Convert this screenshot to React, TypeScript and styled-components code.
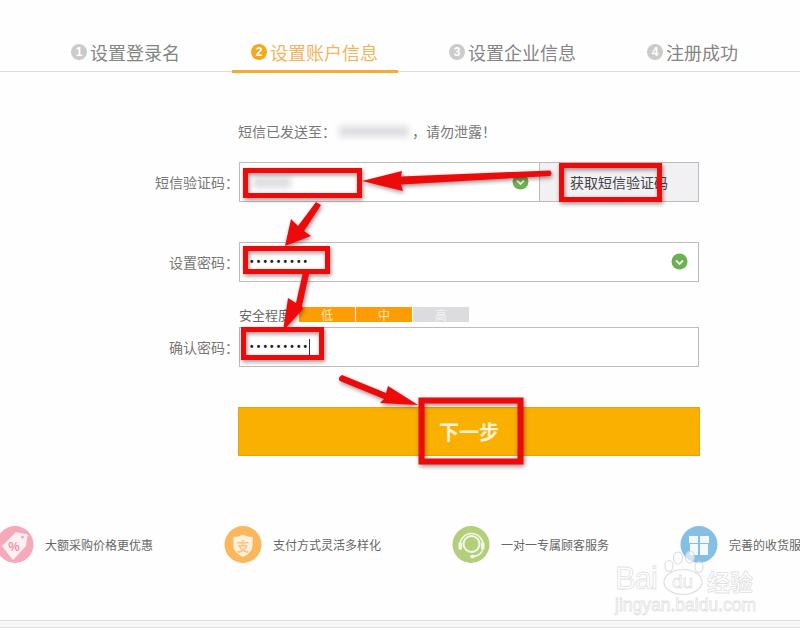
import React from "react";
import styled, { createGlobalStyle } from "styled-components";

const Global = createGlobalStyle`
  html, body { margin: 0; padding: 0; background: #fff; }
  body { font-family: "Noto Sans CJK SC", "Liberation Sans", sans-serif; }
`;

const Page = styled.div`
  position: relative;
  width: 800px;
  height: 633px;
  overflow: hidden;
  background: #fefefe;
`;

const Tabs = styled.nav`
  display: flex;
  gap: 32px;
  height: 71px;
  padding: 0 0 0 52px;
  border-bottom: 1px solid #dcdcdc;
  box-sizing: content-box;
`;

const Tab = styled.div<{ $active?: boolean }>`
  display: flex;
  align-items: center;
  gap: 3px;
  height: 73px;
  box-sizing: border-box;
  padding: 34px 20px 0 19px;
  font-size: 18px;
  line-height: 24px;
  color: ${(p) => (p.$active ? "#efb660" : "#858585")};
  border-bottom: 3px solid ${(p) => (p.$active ? "#f4ae2c" : "transparent")};
  white-space: nowrap;
`;

const StepNum = styled.span<{ $active?: boolean }>`
  display: inline-flex;
  align-items: center;
  justify-content: center;
  width: 16px;
  height: 16px;
  border-radius: 50%;
  background: ${(p) => (p.$active ? "#f6a81c" : "#cbcbcb")};
  color: #fff;
  font: 700 12px/16px "Liberation Sans", sans-serif;
`;

const Form = styled.main`
  display: flex;
  flex-direction: column;
  padding-left: 239px;
  width: 460px;
`;

const Note = styled.div`
  display: flex;
  align-items: center;
  height: 20px;
  margin: 49px 0 21px -1px;
  font-size: 14px;
  color: #777;
  white-space: nowrap;
`;

const Blur = styled.span<{ $w: number }>`
  display: inline-block;
  width: ${(p) => p.$w}px;
  height: 11px;
  margin: 0 3px 0 3px;
  background: #dedee2;
  filter: blur(3px);
`;

const Row = styled.div<{ $top?: number }>`
  position: relative;
  display: flex;
  height: 40px;
  margin-top: ${(p) => p.$top ?? 0}px;
`;

const Label = styled.label`
  position: absolute;
  right: 100%;
  top: 0;
  font-size: 14px;
  line-height: 41px;
  color: #777;
  white-space: nowrap;
`;

const Field = styled.div`
  position: relative;
  flex: 1;
  display: flex;
  align-items: center;
  box-sizing: border-box;
  padding-left: 10px;
  border: 1px solid #bcbcbc;
  background: #fff;
`;

const Dots = styled.span`
  font: 700 10px/1 "Liberation Sans", sans-serif;
  letter-spacing: 3.2px;
  color: #222;
`;

const Caret = styled.span`
  width: 1px;
  height: 16px;
  margin-left: -1px;
  background: #333;
`;

const Check = styled.svg`
  position: absolute;
  right: 10px;
  top: 10px;
`;

const SmsButton = styled.button`
  width: 160px;
  height: 40px;
  margin-left: -1px;
  padding: 0;
  border: 1px solid #bcbcbc;
  background: #f1f0f3;
  font-family: inherit;
  font-size: 14px;
  color: #444;
`;

const Strength = styled.div`
  display: flex;
  align-items: center;
  height: 15px;
  margin: 25px 0 5px;
`;

const StrengthLabel = styled.span`
  width: 60px;
  font-size: 13px;
  line-height: 15px;
  color: #666;
  white-space: nowrap;
`;

const Level = styled.span<{ $on?: boolean }>`
  width: 56px;
  height: 15px;
  margin-right: 1px;
  background: ${(p) => (p.$on ? "#fd9c05" : "#dcdcde")};
  color: ${(p) => (p.$on ? "#fde6bd" : "#f4f4f4")};
  font-size: 12px;
  line-height: 15px;
  text-align: center;
`;

const NextButton = styled.button`
  width: 462px;
  height: 49px;
  margin: 40px 0 0 -1px;
  padding: 0;
  border: 1px solid #e3a316;
  background: #fab000;
  color: #fdf3d8;
  font-family: inherit;
  font-size: 20px;
  font-weight: 700;
`;

const Features = styled.section`
  display: grid;
  grid-template-columns: repeat(4, 228px);
  margin: 70px 0 0 -4px;
`;

const Feature = styled.div`
  display: flex;
  align-items: center;
  gap: 11px;
  height: 37px;
  font-size: 12px;
  color: #666;
  white-space: nowrap;
`;

const Badge = styled.svg`
  flex: none;
  width: 38px;
  height: 37px;
`;

const BadgeText = styled.text`
  font-family: "Noto Sans CJK SC", sans-serif;
  font-weight: 700;
`;

const Footer = styled.footer`
  height: 6px;
  margin-top: 57px;
  border-top: 1px solid #dedede;
  border-bottom: 1px solid #e2e2e2;
  background: #f6f5f8;
`;

const Overlay = styled.svg`
  position: absolute;
  inset: 0;
  pointer-events: none;
  filter: drop-shadow(1px 2px 2px rgba(60, 0, 0, 0.45));
`;

const Watermark = styled.div`
  position: absolute;
  left: 612px;
  top: 545px;
  width: 150px;
  height: 72px;
  pointer-events: none;
`;

const Paw = styled.svg`
  position: absolute;
  left: 50px;
  top: 0;
`;

const WmText = styled.span<{ $left: number; $top: number; $size: number; $line: number; $cjk?: boolean }>`
  position: absolute;
  left: ${(p) => p.$left}px;
  top: ${(p) => p.$top}px;
  font-family: ${(p) => (p.$cjk ? '"Noto Sans CJK SC"' : '"Liberation Sans"')}, sans-serif;
  font-size: ${(p) => p.$size}px;
  font-weight: ${(p) => (p.$cjk ? 700 : 400)};
  line-height: ${(p) => p.$line}px;
  color: rgba(255, 255, 255, 0.8);
  -webkit-text-stroke: 0.8px rgba(205, 205, 205, 0.6);
  white-space: nowrap;
`;

const WmBrand = styled(WmText)`
  letter-spacing: -1px;
`;

const steps = ["设置登录名", "设置账户信息", "设置企业信息", "注册成功"];

const CheckIcon = () => (
  <Check width="17" height="17" viewBox="0 0 17 17">
    <circle cx="8.5" cy="8.5" r="8" fill="#6cb052" />
    <path d="M5 7.5l3.5 3.5L12 7.5" fill="none" stroke="#e8f3e2" strokeWidth="1.8" />
  </Check>
);

const RED = "#ec0a0a";

export default function App() {
  return (
    <Page>
      <Global />
      <Tabs>
        {steps.map((s, i) => (
          <Tab key={s} $active={i === 1}>
            <StepNum $active={i === 1}>{i + 1}</StepNum>
            {s}
          </Tab>
        ))}
      </Tabs>

      <Form>
        <Note>
          短信已发送至：
          <Blur $w={70} />
          ，请勿泄露！
        </Note>
        <Row>
          <Label>短信验证码：</Label>
          <Field>
            <Blur $w={38} />
            <CheckIcon />
          </Field>
          <SmsButton>获取短信验证码</SmsButton>
        </Row>
        <Row $top={40}>
          <Label>设置密码：</Label>
          <Field>
            <Dots>•••••••••</Dots>
            <CheckIcon />
          </Field>
        </Row>
        <Strength>
          <StrengthLabel>安全程度</StrengthLabel>
          <Level $on>低</Level>
          <Level $on>中</Level>
          <Level>高</Level>
        </Strength>
        <Row>
          <Label>确认密码：</Label>
          <Field>
            <Dots>•••••••••</Dots>
            <Caret />
          </Field>
        </Row>
        <NextButton>下一步</NextButton>
      </Form>

      <Features>
        <Feature>
          <Badge viewBox="0 0 38 37">
            <circle cx="19" cy="18.5" r="18.5" fill="#f6a9b9" />
            <path d="M7 20 L20 7 L31 9 L29 20 L17 33 Z" fill="#fdf0f3" strokeLinejoin="round" stroke="#fdf0f3" strokeWidth="1.5" />
            <circle cx="26.5" cy="11" r="1.5" fill="#f6a9b9" />
            <BadgeText x="18" y="25" fontSize="12" fill="#f08da2" textAnchor="middle">%</BadgeText>
          </Badge>
          大额采购价格更优惠
        </Feature>
        <Feature>
          <Badge viewBox="0 0 38 37">
            <circle cx="19" cy="18.5" r="18.5" fill="#fbb75c" />
            <path d="M9.5 11 Q15 11 19 8.5 Q23 11 28.5 11 V20 Q28.5 26.5 19 31 Q9.5 26.5 9.5 20 Z" fill="#fff1dc" />
            <BadgeText x="19" y="24.5" fontSize="13" fill="#f9c683" textAnchor="middle">支</BadgeText>
          </Badge>
          支付方式灵活多样化
        </Feature>
        <Feature>
          <Badge viewBox="0 0 38 37">
            <circle cx="19" cy="18.5" r="18.5" fill="#b3cf7b" />
            <circle cx="19.5" cy="18" r="8" fill="none" stroke="#f4f8ea" strokeWidth="2" />
            <path d="M8 19 A11.5 11.5 0 0 1 31 19" fill="none" stroke="#f4f8ea" strokeWidth="1.5" />
            <rect x="6.5" y="16" width="3.5" height="8" rx="1.7" fill="#f4f8ea" />
            <rect x="29" y="16" width="3.5" height="8" rx="1.7" fill="#f4f8ea" />
            <path d="M30.5 24 Q29 29.5 21 30.5" fill="none" stroke="#f4f8ea" strokeWidth="1.4" />
            <ellipse cx="20.5" cy="30.5" rx="2.6" ry="1.7" fill="#f4f8ea" />
          </Badge>
          一对一专属顾客服务
        </Feature>
        <Feature>
          <Badge viewBox="0 0 38 37">
            <circle cx="19" cy="18.5" r="18.5" fill="#85bfe4" />
            <rect x="9" y="10" width="9" height="7" fill="#f2f8fc" />
            <rect x="20" y="10" width="9" height="7" fill="#f2f8fc" />
            <rect x="10" y="18" width="8" height="11" fill="#f2f8fc" />
            <rect x="20" y="18" width="8" height="11" fill="#f2f8fc" />
          </Badge>
          完善的收货服务
        </Feature>
      </Features>

      <Footer />

      <Overlay width="800" height="633" viewBox="0 0 800 633">
        <g fill="none" stroke={RED} strokeWidth="5">
          <rect x="245.5" y="170.5" width="114" height="25" />
          <rect x="561.5" y="165.5" width="98" height="34" />
          <rect x="245.5" y="248.5" width="82" height="23" />
          <rect x="243.5" y="329.5" width="78" height="28" />
        </g>
        <rect x="421.5" y="400.5" width="99" height="61" fill="none" stroke={RED} strokeWidth="6" />
        <g fill={RED}>
          <path d="M362 181 L402 171 L401 176.5 L550 170.5 Q553 173 550 176 L401 184.5 L403 191 Z" />
          <path d="M285 246 L291 219 L298 226 L316 202 L321 205 L304 231 L311 236 Z" />
          <path d="M283 331 L288 298 L296 303 L303 272 L309 274 L302 306 L303 309 Z" />
          <path d="M418 405 L388 386 L386 393 L342 375 Q337 378 340 381 L384 399 L380 403 Z" />
        </g>
      </Overlay>

      <Watermark>
        <Paw width="46" height="52" viewBox="0 0 46 52">
          <g fill="rgba(255,255,255,0.6)" stroke="rgba(205,205,205,0.65)" strokeWidth="1.2">
            <ellipse cx="7" cy="21" rx="4" ry="5.5" />
            <ellipse cx="16" cy="13" rx="4.5" ry="6" />
            <ellipse cx="28" cy="12" rx="4.5" ry="6" />
            <ellipse cx="37" cy="22" rx="4" ry="5.5" />
            <ellipse cx="21" cy="37" rx="19" ry="12.5" />
          </g>
        </Paw>
        <WmBrand $left={3} $top={20} $size={31} $line={28}>Bai</WmBrand>
        <WmText $left={60} $top={27} $size={19} $line={20}>du</WmText>
        <WmText $left={95} $top={23} $size={23} $line={26} $cjk>经验</WmText>
        <WmText $left={3} $top={50} $size={17.5} $line={20}>jingyan.baidu.com</WmText>
      </Watermark>
    </Page>
  );
}
